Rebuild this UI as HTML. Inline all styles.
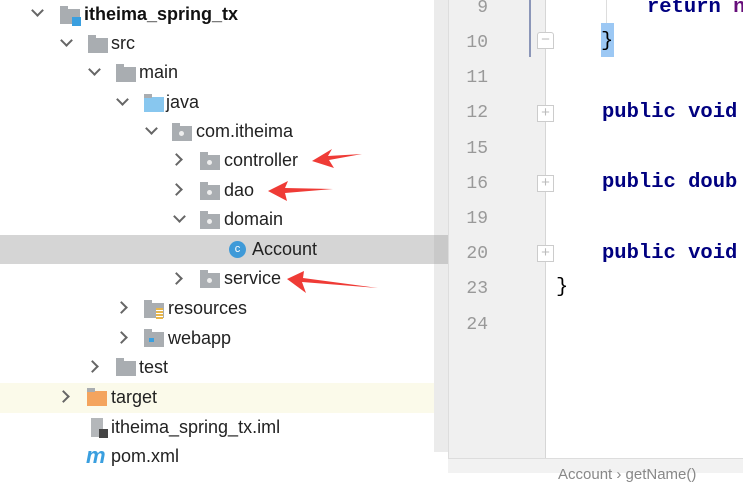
<!DOCTYPE html>
<html><head><meta charset="utf-8"><style>
*{margin:0;padding:0;box-sizing:border-box}
body{width:743px;height:473px;overflow:hidden;background:#fff;position:relative;font-family:"Liberation Sans",sans-serif}
.t{position:absolute;font-size:18px;color:#222;line-height:20px;white-space:nowrap}
.ch{position:absolute;width:9px;height:9px;border-right:2px solid #666;border-bottom:2px solid #666}
.dn{transform:rotate(45deg)}
.rt{transform:rotate(-45deg)}
.f{position:absolute;width:20px;height:15px;background:#a9adb1}
.f:before{content:"";position:absolute;left:0;top:-3px;width:8px;height:4px;background:#a9adb1}
.pk:after{content:"";position:absolute;left:7px;top:5px;width:5px;height:5px;background:#eee;border-radius:50%}
.ln{position:absolute;left:448px;width:40px;text-align:right;font-family:"Liberation Mono",monospace;font-size:18px;color:#999;line-height:20px}
.code{position:absolute;font-family:"Liberation Mono",monospace;font-weight:bold;font-size:20.5px;color:#000080;line-height:22px;white-space:pre}
.fm{position:absolute;left:537px;width:17px;height:17px;border:1px solid #ccc;background:#fff;color:#bbb;font-size:15px;line-height:14px;text-align:center}
</style></head><body>
<div style="position:absolute;left:0;top:235px;width:434px;height:29px;background:#d5d5d5"></div>
<div style="position:absolute;left:0;top:383px;width:434px;height:30px;background:#fbfaea"></div>
<div style="position:absolute;left:434px;top:0;width:14px;height:452px;background:#ebebeb"></div>
<div style="position:absolute;left:434px;top:235px;width:14px;height:29px;background:#c9c9c9"></div>
<div style="position:absolute;left:448px;top:0;width:97px;height:458px;background:#f0f0f0;border-left:1px solid #ddd"></div>
<div style="position:absolute;left:545px;top:0;width:1px;height:458px;background:#d6d6d6"></div>
<div style="position:absolute;left:448px;top:458px;width:295px;height:15px;background:#f2f2f2;border-top:1px solid #ddd"></div>
<div style="position:absolute;left:558px;top:466px;font-size:15px;color:#888;white-space:nowrap">Account  ›  getName()</div>
<div style="position:absolute;left:529px;top:0;width:2px;height:57px;background:#8b96b8"></div>
<div style="position:absolute;left:606px;top:0;width:1px;height:23px;background:#ddd"></div>

<div class="ch dn" style="left:33px;top:6px"></div>
<div class="f" style="left:60px;top:9px;background:#a9adb1"></div><div style="position:absolute;left:72px;top:17px;width:9px;height:9px;background:#3a9fdf"></div>
<div class="t" style="left:84px;top:4px;font-weight:bold;color:#111">itheima_spring_tx</div>

<div class="ch dn" style="left:62px;top:36px"></div>
<div class="f" style="left:88px;top:38px"></div><div class="t" style="left:111px;top:33px">src</div>

<div class="ch dn" style="left:90px;top:65px"></div>
<div class="f" style="left:116px;top:67px"></div><div class="t" style="left:139px;top:62px">main</div>

<div class="ch dn" style="left:118px;top:95px"></div>
<div class="f" style="left:144px;top:97px;background:#88c7ef"></div><div class="t" style="left:166px;top:92px">java</div>

<div class="ch dn" style="left:147px;top:124px"></div>
<div class="f pk" style="left:172px;top:126px"></div><div class="t" style="left:196px;top:121px">com.itheima</div>

<div class="ch rt" style="left:172px;top:155px"></div>
<div class="f pk" style="left:200px;top:155px"></div><div class="t" style="left:224px;top:150px">controller</div>

<div class="ch rt" style="left:172px;top:185px"></div>
<div class="f pk" style="left:200px;top:185px"></div><div class="t" style="left:224px;top:180px">dao</div>

<div class="ch dn" style="left:175px;top:212px"></div>
<div class="f pk" style="left:200px;top:214px"></div><div class="t" style="left:224px;top:209px">domain</div>

<div style="position:absolute;left:229px;top:241px;width:17px;height:17px;border-radius:50%;background:#3f9ad8;color:#fff;font-size:11px;line-height:17px;text-align:center">c</div>
<div class="t" style="left:252px;top:239px">Account</div>

<div class="ch rt" style="left:172px;top:274px"></div>
<div class="f pk" style="left:200px;top:273px"></div><div class="t" style="left:224px;top:268px">service</div>

<div class="ch rt" style="left:117px;top:303px"></div>
<div class="f" style="left:144px;top:303px"></div><div style="position:absolute;left:156px;top:308px;width:7px;height:12px;background:repeating-linear-gradient(#e8b64a 0 2px,#fff 2px 3px)"></div>
<div class="t" style="left:168px;top:298px">resources</div>

<div class="ch rt" style="left:117px;top:333px"></div>
<div class="f" style="left:144px;top:332px"></div><div style="position:absolute;left:149px;top:338px;width:5px;height:4px;background:#3a9fdf"></div>
<div class="t" style="left:168px;top:328px">webapp</div>

<div class="ch rt" style="left:88px;top:362px"></div>
<div class="f" style="left:116px;top:361px"></div><div class="t" style="left:139px;top:357px">test</div>

<div class="ch rt" style="left:59px;top:392px"></div>
<div class="f" style="left:87px;top:391px;background:#f4a45e"></div><div class="t" style="left:111px;top:387px">target</div>

<div style="position:absolute;left:91px;top:418px;width:12px;height:19px;background:#b4b7ba"></div><div style="position:absolute;left:99px;top:429px;width:9px;height:9px;background:#444"></div>
<div class="t" style="left:111px;top:417px">itheima_spring_tx.iml</div>

<div style="position:absolute;left:86px;top:443px;font-size:22px;font-style:italic;color:#3a9fdf;font-weight:bold;line-height:26px">m</div>
<div class="t" style="left:111px;top:446px">pom.xml</div>

<svg style="position:absolute;left:0;top:0" width="434" height="473">
<g fill="#ef3b36">
<polygon points="312,161 332,149 328,156 362,154 329,160 334,168"/>
<polygon points="268,191 288,181 285,188 333,189 285,193 287,201"/>
<polygon points="287,279 304,271 303,278 378,288 302,282 306,293"/>
</g>
</svg>

<div class="ln" style="top:-2px">9</div>
<div class="ln" style="top:33px">10</div>
<div class="ln" style="top:68px">11</div>
<div class="ln" style="top:103px">12</div>
<div class="ln" style="top:139px">15</div>
<div class="ln" style="top:174px">16</div>
<div class="ln" style="top:209px">19</div>
<div class="ln" style="top:244px">20</div>
<div class="ln" style="top:279px">23</div>
<div class="ln" style="top:315px">24</div>

<div class="fm" style="top:32px;border-radius:3px 3px 0 0">−</div>
<div class="fm" style="top:105px">+</div>
<div class="fm" style="top:175px">+</div>
<div class="fm" style="top:245px">+</div>

<div style="position:absolute;left:601px;top:23px;width:13px;height:34px;background:#9cc8f4"></div>
<div class="code" style="left:647px;top:-3px">return <span style="color:#660e7a">n</span></div>
<div class="code" style="left:601px;top:31px;font-weight:normal;color:#000">}</div>
<div class="code" style="left:602px;top:102px">public void</div>
<div class="code" style="left:602px;top:172px">public doub</div>
<div class="code" style="left:602px;top:243px">public void</div>
<div class="code" style="left:556px;top:277px;font-weight:normal;color:#000">}</div>
</body></html>
